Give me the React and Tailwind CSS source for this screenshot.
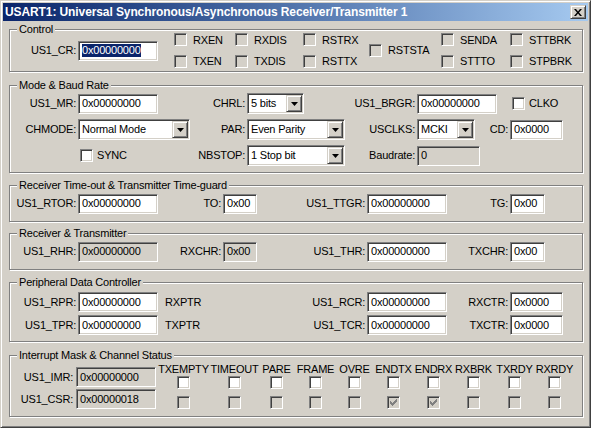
const sunken =
  'border border-t-[#808080] border-l-[#808080] border-r-white border-b-white shadow-[inset_1px_1px_0_#404040,inset_-1px_-1px_0_#d4d0c8]';
const raised =
  'border border-t-[#d4d0c8] border-l-[#d4d0c8] border-r-[#404040] border-b-[#404040] shadow-[inset_1px_1px_0_#fff,inset_-1px_-1px_0_#808080]';

function Tick({ color }) {
  return (
    <svg width="7" height="7" viewBox="0 0 7 7" shapeRendering="crispEdges">
      {[2, 3, 4, 3, 2, 1, 0].map((y, x) => (
        <rect key={x} x={x} y={y} width="1" height="3" fill={color} />
      ))}
    </svg>
  );
}

function Check({ gray, checked }) {
  return (
    <div
      className={`${sunken} w-[13px] h-[13px] shrink-0 flex items-center justify-center ${
        gray ? 'bg-[#d4d0c8]' : 'bg-white'
      }`}
    >
      {checked && <Tick color={gray ? '#808080' : '#000'} />}
    </div>
  );
}

function Field({ value, width, readOnly, selected }) {
  return (
    <div
      className={`${sunken} ${width} h-[20px] shrink-0 flex items-center pl-[3px] overflow-hidden whitespace-nowrap ${
        readOnly ? 'bg-[#d4d0c8]' : 'bg-white'
      }`}
    >
      {selected ? (
        <span className="bg-[#0a246a] text-white leading-[13px]">{value}</span>
      ) : (
        value
      )}
    </div>
  );
}

function Select({ value, width }) {
  return (
    <div
      className={`${sunken} ${width} h-[21px] shrink-0 flex items-center pl-[3px] pr-[1px] bg-white whitespace-nowrap`}
    >
      <span className="flex-1 overflow-hidden">{value}</span>
      <div className={`${raised} w-[16px] h-[17px] shrink-0 bg-[#d4d0c8] flex items-center justify-center`}>
        <svg width="7" height="4" viewBox="0 0 7 4">
          <path d="M0 0h7L3.5 4z" fill="#000" />
        </svg>
      </div>
    </div>
  );
}

function Label({ width, children }) {
  return <span className={`${width} shrink-0 text-right whitespace-nowrap`}>{children}</span>;
}

function Group({ title, className, children }) {
  return (
    <div
      className={`relative ml-[6px] w-[574px] border border-[#808080] shadow-[inset_1px_1px_0_#fff,1px_1px_0_#fff] ${className}`}
    >
      <span className="absolute left-[7px] top-[-7px] px-[2px] bg-[#d4d0c8] leading-[13px] whitespace-nowrap">
        {title}
      </span>
      {children}
    </div>
  );
}

function CheckItem({ label, gap = 'gap-[6px]' }) {
  return (
    <div className={`flex items-center ${gap}`}>
      <Check gray />
      <span className="whitespace-nowrap">{label}</span>
    </div>
  );
}

const statusBits = [
  { name: 'TXEMPTY', w: 'w-[51px]' },
  { name: 'TIMEOUT', w: 'w-[51px]' },
  { name: 'PARE', w: 'w-[33px]' },
  { name: 'FRAME', w: 'w-[45px]' },
  { name: 'OVRE', w: 'w-[33px]' },
  { name: 'ENDTX', w: 'w-[45px]', csr: true },
  { name: 'ENDRX', w: 'w-[35px]', csr: true },
  { name: 'RXBRK', w: 'w-[45px]' },
  { name: 'TXRDY', w: 'w-[37px]' },
  { name: 'RXRDY', w: 'w-[43px]' },
];

export default function App() {
  return (
    <div className="w-[591px] h-[428px] overflow-hidden bg-[#d4d0c8] text-black text-[11px] tracking-[-0.2px] font-['Liberation_Sans',Arial,sans-serif] border border-t-[#d4d0c8] border-l-[#d4d0c8] border-r-[#404040] border-b-[#404040] shadow-[inset_1px_1px_0_#fff,inset_-1px_-1px_0_#808080] p-[2px]">
      {/* title bar */}
      <div className="h-[18px] flex items-center justify-between bg-linear-to-r from-[#0a246a] to-[#a6caf0]">
        <span className="pl-[2px] text-white font-bold text-[12px] tracking-[-0.1px] whitespace-nowrap">
          USART1: Universal Synchronous/Asynchronous Receiver/Transmitter 1
        </span>
        <div className={`${raised} mr-[2px] w-[16px] h-[14px] bg-[#d4d0c8] flex items-center justify-center`}>
          <svg width="8" height="7" viewBox="0 0 8 7">
            <path d="M0 0h2l2 2.5L6 0h2L5 3.5 8 7H6L4 4.5 2 7H0l3-3.5z" fill="#000" />
          </svg>
        </div>
      </div>

      {/* Control */}
      <Group title="Control" className="mt-[8px] h-[43px]">
        <div className="flex h-full items-center">
          <Label width="w-[66px]">US1_CR:</Label>
          <div className="ml-[2px]">
            <Field value="0x00000000" width="w-[80px]" selected />
          </div>
          <div className="ml-[16px] flex items-center">
            <div className="w-[61px] flex flex-col gap-[5px]">
              <CheckItem label="RXEN" />
              <CheckItem label="TXEN" />
            </div>
            <div className="w-[68px] flex flex-col gap-[5px]">
              <CheckItem label="RXDIS" />
              <CheckItem label="TXDIS" />
            </div>
            <div className="w-[66px] flex flex-col gap-[5px]">
              <CheckItem label="RSTRX" />
              <CheckItem label="RSTTX" />
            </div>
            <div className="w-[72px] flex items-center">
              <CheckItem label="RSTSTA" />
            </div>
            <div className="w-[69px] flex flex-col gap-[5px]">
              <CheckItem label="SENDA" />
              <CheckItem label="STTTO" />
            </div>
            <div className="flex flex-col gap-[5px]">
              <CheckItem label="STTBRK" />
              <CheckItem label="STPBRK" />
            </div>
          </div>
        </div>
      </Group>

      {/* Mode & Baud Rate */}
      <Group title="Mode & Baud Rate" className="mt-[13px] h-[88px]">
        <div className="flex flex-col gap-[5px] pt-[7px]">
          <div className="flex h-[21px] items-center">
            <div className="w-[170px] shrink-0 flex items-center gap-[2px]">
              <Label width="w-[66px]">US1_MR:</Label>
              <Field value="0x00000000" width="w-[80px]" />
            </div>
            <div className="w-[170px] shrink-0 flex items-center gap-[2px]">
              <Label width="w-[65px]">CHRL:</Label>
              <Select value="5 bits" width="w-[57px]" />
            </div>
            <div className="w-[135px] shrink-0 flex items-center gap-[2px]">
              <Label width="w-[65px]">US1_BRGR:</Label>
              <Field value="0x00000000" width="w-[80px]" />
            </div>
            <div className="pl-[27px] flex items-center gap-[4px]">
              <Check />
              <span>CLKO</span>
            </div>
          </div>
          <div className="flex h-[21px] items-center">
            <div className="w-[170px] shrink-0 flex items-center gap-[2px]">
              <Label width="w-[66px]">CHMODE:</Label>
              <Select value="Normal Mode" width="w-[112px]" />
            </div>
            <div className="w-[170px] shrink-0 flex items-center gap-[2px]">
              <Label width="w-[65px]">PAR:</Label>
              <Select value="Even Parity" width="w-[98px]" />
            </div>
            <div className="w-[135px] shrink-0 flex items-center gap-[2px]">
              <Label width="w-[65px]">USCLKS:</Label>
              <Select value="MCKI" width="w-[58px]" />
            </div>
            <div className="flex items-center gap-[2px]">
              <Label width="w-[23px]">CD:</Label>
              <Field value="0x0000" width="w-[53px]" />
            </div>
          </div>
          <div className="flex h-[21px] items-center">
            <div className="w-[170px] shrink-0 flex items-center gap-[4px] pl-[70px]">
              <Check />
              <span>SYNC</span>
            </div>
            <div className="w-[170px] shrink-0 flex items-center gap-[2px]">
              <Label width="w-[65px]">NBSTOP:</Label>
              <Select value="1 Stop bit" width="w-[98px]" />
            </div>
            <div className="w-[135px] shrink-0 flex items-center gap-[2px]">
              <Label width="w-[65px]">Baudrate:</Label>
              <Field value="0" width="w-[63px]" readOnly />
            </div>
          </div>
        </div>
      </Group>

      {/* Receiver Time-out & Transmitter Time-guard */}
      <Group title="Receiver Time-out & Transmitter Time-guard" className="mt-[12px] h-[37px]">
        <div className="flex h-full items-center">
          <div className="w-[150px] shrink-0 flex items-center gap-[2px]">
            <Label width="w-[66px]">US1_RTOR:</Label>
            <Field value="0x00000000" width="w-[80px]" />
          </div>
          <div className="w-[140px] shrink-0 flex items-center gap-[2px]">
            <Label width="w-[61px]">TO:</Label>
            <Field value="0x00" width="w-[34px]" />
          </div>
          <div className="w-[155px] shrink-0 flex items-center gap-[2px]">
            <Label width="w-[65px]">US1_TTGR:</Label>
            <Field value="0x00000000" width="w-[80px]" />
          </div>
          <div className="flex items-center gap-[2px]">
            <Label width="w-[53px]">TG:</Label>
            <Field value="0x00" width="w-[35px]" />
          </div>
        </div>
      </Group>

      {/* Receiver & Transmitter */}
      <Group title="Receiver & Transmitter" className="mt-[11px] h-[37px]">
        <div className="flex h-full items-center">
          <div className="w-[150px] shrink-0 flex items-center gap-[2px]">
            <Label width="w-[66px]">US1_RHR:</Label>
            <Field value="0x00000000" width="w-[80px]" readOnly />
          </div>
          <div className="w-[140px] shrink-0 flex items-center gap-[2px]">
            <Label width="w-[61px]">RXCHR:</Label>
            <Field value="0x00" width="w-[34px]" readOnly />
          </div>
          <div className="w-[155px] shrink-0 flex items-center gap-[2px]">
            <Label width="w-[65px]">US1_THR:</Label>
            <Field value="0x00000000" width="w-[80px]" />
          </div>
          <div className="flex items-center gap-[2px]">
            <Label width="w-[53px]">TXCHR:</Label>
            <Field value="0x00" width="w-[35px]" />
          </div>
        </div>
      </Group>

      {/* Peripheral Data Controller */}
      <Group title="Peripheral Data Controller" className="mt-[12px] h-[60px]">
        <div className="flex flex-col gap-[3px] pt-[9px]">
          {[
            ['US1_RPR:', 'RXPTR', 'US1_RCR:', 'RXCTR:'],
            ['US1_TPR:', 'TXPTR', 'US1_TCR:', 'TXCTR:'],
          ].map(([a, b, c, d]) => (
            <div key={a} className="flex h-[20px] items-center">
              <div className="w-[290px] shrink-0 flex items-center gap-[2px]">
                <Label width="w-[66px]">{a}</Label>
                <Field value="0x00000000" width="w-[80px]" />
                <span className="ml-[5px]">{b}</span>
              </div>
              <div className="w-[155px] shrink-0 flex items-center gap-[2px]">
                <Label width="w-[65px]">{c}</Label>
                <Field value="0x00000000" width="w-[80px]" />
              </div>
              <div className="flex items-center gap-[2px]">
                <Label width="w-[53px]">{d}</Label>
                <Field value="0x0000" width="w-[53px]" />
              </div>
            </div>
          ))}
        </div>
      </Group>

      {/* Interrupt Mask & Channel Status */}
      <Group title="Interrupt Mask & Channel Status" className="mt-[13px] h-[62px]">
        <div className="flex">
          <div className="w-[148px] shrink-0 flex flex-col gap-[2px] pt-[11px]">
            <div className="flex items-center gap-[3px]">
              <Label width="w-[63px]">US1_IMR:</Label>
              <Field value="0x00000000" width="w-[80px]" readOnly />
            </div>
            <div className="flex items-center gap-[3px]">
              <Label width="w-[63px]">US1_CSR:</Label>
              <Field value="0x00000018" width="w-[80px]" readOnly />
            </div>
          </div>
          <div className="flex pt-[7px]">
            {statusBits.map((bit) => (
              <div key={bit.name} className={`${bit.w} shrink-0 flex flex-col items-center`}>
                <span className="leading-[13px] whitespace-nowrap">{bit.name}</span>
                <Check />
                <div className="mt-[7px]">
                  <Check gray checked={bit.csr} />
                </div>
              </div>
            ))}
          </div>
        </div>
      </Group>
    </div>
  );
}
